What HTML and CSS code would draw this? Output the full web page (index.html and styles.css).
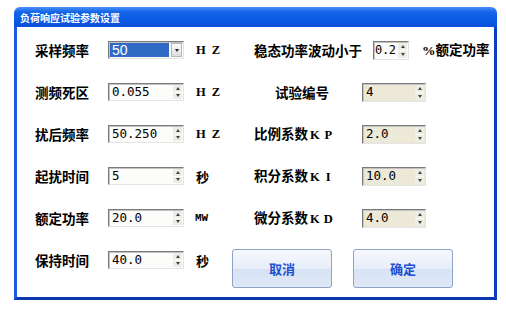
FILE: index.html
```html
<!DOCTYPE html>
<html lang="zh">
<head>
    <meta charset="UTF-8">
    <title>负荷响应试验参数设置</title>
    <link rel="stylesheet" href="styles.css">
</head>
<body>
<div class="window">
    <div class="titlebar">负荷响应试验参数设置</div>
    <div class="client">
        <!-- 第一行 -->
        <div class="label">采样频率</div>
        <div class="combo">
            <span class="val">50</span>
            <span class="drop"><i></i></span>
        </div>
        <div class="unit serif">H<span class="gap">Z</span></div>
        <div class="right">
            <span class="label wide">稳态功率波动小于</span>
            <div class="spin small">
                <span class="val">0.2</span>
                <span class="arrows"><i class="up"></i><i class="down"></i></span>
            </div>
            <span class="label pct"><span class="serif">%</span>额定功率</span>
        </div>

        <!-- 第二行 -->
        <div class="label">测频死区</div>
        <div class="spin">
            <span class="val">0.055</span>
            <span class="arrows"><i class="up"></i><i class="down"></i></span>
        </div>
        <div class="unit serif">H<span class="gap">Z</span></div>
        <div class="right">
            <span class="label name indent">试验编号</span>
            <div class="spin gray">
                <span class="val">4</span>
                <span class="arrows"><i class="up"></i><i class="down"></i></span>
            </div>
        </div>

        <!-- 第三行 -->
        <div class="label">扰后频率</div>
        <div class="spin">
            <span class="val">50.250</span>
            <span class="arrows"><i class="up"></i><i class="down"></i></span>
        </div>
        <div class="unit serif">H<span class="gap">Z</span></div>
        <div class="right">
            <span class="label name">比例系数<span class="serif fw">K</span><span class="serif fw">P</span></span>
            <div class="spin gray">
                <span class="val">2.0</span>
                <span class="arrows"><i class="up"></i><i class="down"></i></span>
            </div>
        </div>

        <!-- 第四行 -->
        <div class="label">起扰时间</div>
        <div class="spin">
            <span class="val">5</span>
            <span class="arrows"><i class="up"></i><i class="down"></i></span>
        </div>
        <div class="unit">秒</div>
        <div class="right">
            <span class="label name">积分系数<span class="serif fw">K</span><span class="serif fw">I</span></span>
            <div class="spin gray">
                <span class="val">10.0</span>
                <span class="arrows"><i class="up"></i><i class="down"></i></span>
            </div>
        </div>

        <!-- 第五行 -->
        <div class="label">额定功率</div>
        <div class="spin">
            <span class="val">20.0</span>
            <span class="arrows"><i class="up"></i><i class="down"></i></span>
        </div>
        <div class="unit mono">MW</div>
        <div class="right">
            <span class="label name">微分系数<span class="serif fw">K</span><span class="serif fw">D</span></span>
            <div class="spin gray">
                <span class="val">4.0</span>
                <span class="arrows"><i class="up"></i><i class="down"></i></span>
            </div>
        </div>

        <!-- 第六行 -->
        <div class="label">保持时间</div>
        <div class="spin">
            <span class="val">40.0</span>
            <span class="arrows"><i class="up"></i><i class="down"></i></span>
        </div>
        <div class="unit">秒</div>
        <div class="buttons">
            <button class="btn">取消</button>
            <button class="btn">确定</button>
        </div>
    </div>
</div>
</body>
</html>
```

FILE: styles.css
```css
body {
    margin: 0;
    background: #fff;
    font-family: "Noto Sans CJK SC", sans-serif;
    color: #000;
}
.window {
    margin: 7px 0 0 14px;
    width: 483px;
    height: 293px;
    display: flex;
    flex-direction: column;
}
.titlebar {
    height: 20px;
    flex: none;
    border-radius: 6px 6px 0 0;
    background: linear-gradient(#4a90f7, #1565ea 25%, #0a5ae4 65%, #0a4ed6);
    color: #fff;
    font-size: 10px;
    font-weight: bold;
    padding-left: 6px;
    display: flex;
    align-items: center;
}
.client {
    flex: 1;
    box-sizing: border-box;
    border: 3px solid;
    border-top: 0;
    border-color: #1b5be4 #0b3fc2 #0a36ae #1b5be4;
    background: #fff;
    padding: 2px 0 0 18px;
    display: grid;
    grid-template-columns: 73px 76px 48px 1fr;
    grid-template-rows: repeat(6, 42px);
    align-items: center;
}
.label {
    font-size: 13.5px;
    font-weight: bold;
    white-space: nowrap;
    line-height: 18px;
}
.unit {
    padding-left: 12px;
    font-size: 13px;
    font-weight: bold;
}
.serif {
    font-family: "Liberation Serif", serif;
    font-weight: bold;
}
.unit.serif {
    font-size: 12.5px;
}
.gap {
    margin-left: 6px;
}
.mono {
    font-family: "Liberation Mono", monospace;
    font-size: 11px;
    padding-left: 11px;
}
.fw {
    display: inline-block;
    width: 13.5px;
    text-align: center;
    font-size: 12.5px;
}
.right {
    display: flex;
    align-items: center;
    padding-left: 22px;
}
.right .wide {
    width: 108px;
}
.right .name {
    width: 108px;
    box-sizing: border-box;
}
.right .indent {
    padding-left: 21px;
}
.right .pct {
    margin-left: 13px;
}

/* 数值输入框 */
.spin,
.combo {
    display: flex;
    height: 18px;
    box-sizing: border-box;
    border: 1px solid;
    border-color: #7b7b7b #e4e4e4 #e4e4e4 #7b7b7b;
    box-shadow: inset 1px 1px 0 #c2c2c2;
    background: #fcfcfa;
}
.right .spin {
    width: 64px;
    height: 19px;
}
.right .spin.small {
    width: 36px;
    margin-left: 11px;
    background: #fcfcfa;
}
.spin.gray {
    background: #ece9d8;
}
.spin .val {
    flex: 1;
    padding: 0 0 0 3px;
    font-family: "DejaVu Sans Mono", monospace;
    font-size: 12.5px;
    line-height: 16px;
    overflow: hidden;
}
.spin.small .val {
    padding-left: 1px;
    font-size: 12px;
    letter-spacing: -0.3px;
}
.arrows {
    width: 9px;
    flex: none;
    margin: 1px 1px 1px 0;
    display: flex;
    flex-direction: column;
    background: #eeede5;
}
.arrows i {
    flex: 1;
    display: flex;
    align-items: center;
    justify-content: center;
}
.arrows .up {
    border-bottom: 1px solid #fff;
}
.arrows .up::before,
.arrows .down::before {
    content: "";
    border-left: 2px solid transparent;
    border-right: 2px solid transparent;
}
.arrows .up::before {
    border-bottom: 3px solid #444;
}
.arrows .down::before {
    border-top: 3px solid #444;
}

/* 下拉框 */
.combo .val {
    flex: 1;
    margin: 1px 2px 1px 1px;
    background: #316ac5;
    color: #fff;
    font-family: "Liberation Sans", sans-serif;
    font-size: 14px;
    line-height: 14px;
    padding-left: 2px;
}
.combo .drop {
    width: 11px;
    margin: 1px 1px 1px 0;
    background: linear-gradient(#fdfdfd, #dcdcdc);
    border: 1px solid #b8b8b8;
    box-sizing: border-box;
    display: flex;
    align-items: center;
    justify-content: center;
}
.combo .drop i {
    border-left: 2.5px solid transparent;
    border-right: 2.5px solid transparent;
    border-top: 3px solid #222;
}

/* 按钮 */
.buttons {
    align-self: start;
    margin-top: 10px;
    display: flex;
    gap: 21px;
}
.btn {
    width: 100px;
    height: 39px;
    border: 1px solid #8fa3c4;
    border-radius: 3px;
    background: linear-gradient(#f6f8fd, #e7eef9 50%, #d7e3f4 52%, #dfe8f6);
    color: #1d4fd2;
    font-family: "Noto Sans CJK SC", sans-serif;
    font-size: 13px;
    font-weight: bold;
    padding: 0;
    cursor: pointer;
}
```
